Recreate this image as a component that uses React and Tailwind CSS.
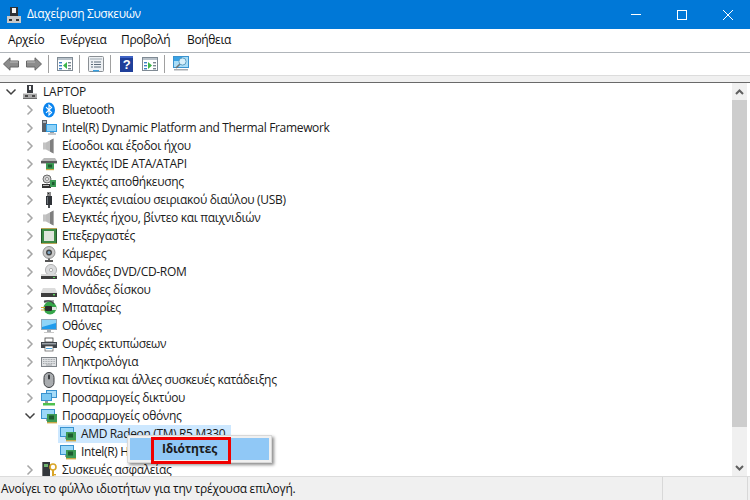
import React from "react";

const I = ({ children, vb = "0 0 16 16", className = "w-4 h-4" }) => (
  <svg viewBox={vb} className={`${className} shrink-0`} xmlns="http://www.w3.org/2000/svg">
    {children}
  </svg>
);

const Computer = () => (
  <I>
    <rect x="5" y="1" width="6" height="8" fill="#3a3d42" />
    <rect x="7" y="2" width="2" height="4" fill="#f4f4f4" />
    <rect x="1" y="9" width="14" height="6" fill="#a8a8a8" />
    <rect x="1" y="9" width="14" height="1" fill="#dadada" />
    <rect x="3" y="11" width="3" height="2" fill="#4a4a4a" />
    <rect x="10" y="11" width="3" height="2" fill="#4a4a4a" />
    <rect x="1" y="14" width="14" height="1" fill="#6b6b6b" />
  </I>
);

const Bluetooth = () => (
  <I>
    <ellipse cx="8" cy="8" rx="6" ry="7.6" fill="#0a84ee" />
    <path d="M5 5.2 10.6 10.6 8 13V3l2.6 2.4L5 10.8" fill="none" stroke="#fff" strokeWidth="1.1" />
  </I>
);

const Platform = () => (
  <I>
    <rect x="1" y="0" width="5" height="12" fill="#5a6068" />
    <rect x="2" y="1" width="3" height="2" fill="#aeb4ba" />
    <rect x="5" y="4" width="11" height="8" fill="#2f9de4" />
    <rect x="6" y="5" width="9" height="6" fill="#8fd2f7" />
    <rect x="9" y="12" width="4" height="1" fill="#9aa0a6" />
    <rect x="7" y="13" width="8" height="2" fill="#c5c8cc" />
  </I>
);

const Speaker = () => (
  <I>
    <rect x="2" y="4.5" width="3" height="7" fill="#c4c4c4" />
    <path d="M5 4.5 12.5 0.5v15L5 11.5z" fill="#bdbdbd" />
    <path d="M9 2.5 12.5 0.5v15L9 13.5z" fill="#7f7f7f" />
  </I>
);

const Chip = ({ x = 5, y = 7 }) => (
  <g>
    <rect x={x} y={y} width="8" height="7" fill="#3d9b55" />
    <rect x={x + 2} y={y + 1.5} width="4" height="3" fill="#1d5b30" />
    <rect x={x} y={y + 6} width="8" height="1.2" fill="#c8a848" />
  </g>
);

const Ide = () => (
  <I>
    <path d="M0 5 3 2h11l2 3v3H0z" fill="#b9b9b9" />
    <rect x="0" y="5" width="16" height="2" fill="#5b5b5b" />
    <Chip x={5} y={7} />
  </I>
);

const Storage = () => (
  <I>
    <circle cx="6" cy="5" r="4" fill="#cfcfcf" stroke="#6a6a6a" strokeWidth="1" />
    <circle cx="6" cy="5" r="1.5" fill="#fff" stroke="#555" strokeWidth="0.6" />
    <rect x="1" y="10" width="9" height="4" fill="#333" />
    <rect x="2" y="11" width="6" height="1" fill="#bbb" />
    <rect x="9" y="6" width="6" height="7" fill="#3d9b55" />
    <rect x="11" y="8" width="2.5" height="3" fill="#1d5b30" />
  </I>
);

const Usb = () => (
  <I>
    <rect x="6" y="0" width="4" height="4" fill="#8a8a8a" />
    <rect x="7" y="1" width="1" height="1" fill="#222" />
    <rect x="5" y="4" width="6" height="9" fill="#2f3338" />
    <rect x="6" y="5" width="1" height="7" fill="#6e747a" />
    <rect x="7" y="13" width="2" height="3" fill="#4a4e52" />
  </I>
);

const Cpu = () => (
  <I>
    <rect x="0" y="0" width="16" height="16" fill="#24562c" />
    <rect x="1" y="1" width="14" height="14" fill="#3c8a44" />
    <rect x="3" y="3" width="10" height="10" fill="#dfe5dc" />
    <rect x="0" y="0" width="16" height="1" fill="#b8a458" />
    <rect x="0" y="15" width="16" height="1" fill="#b8a458" />
  </I>
);

const Camera = () => (
  <I>
    <circle cx="8" cy="6.5" r="6" fill="#c9c9c9" stroke="#7e7e7e" strokeWidth="0.8" />
    <circle cx="8" cy="6.5" r="3" fill="#444" />
    <circle cx="8" cy="6.5" r="1.5" fill="#7fa6c4" />
    <rect x="7" y="12.5" width="2" height="1.5" fill="#666" />
    <rect x="4" y="14" width="8" height="2" fill="#555" />
  </I>
);

const Dvd = () => (
  <I>
    <circle cx="10" cy="6" r="5.6" fill="#d9dadc" stroke="#9a9a9a" strokeWidth="0.7" />
    <circle cx="10" cy="6" r="1.6" fill="#fff" stroke="#8a8a8a" strokeWidth="0.6" />
    <rect x="0" y="10" width="16" height="2" fill="#d8d8d8" />
    <rect x="0" y="12" width="16" height="3" fill="#3e3e3e" />
    <rect x="12" y="13" width="2" height="1" fill="#5fd35f" />
  </I>
);

const Disk = () => (
  <I>
    <path d="M2 6h12l2 4v1H0v-1z" fill="#dcdcdc" />
    <rect x="0" y="11" width="16" height="4" fill="#3e3e3e" />
    <rect x="12" y="12" width="2" height="1.4" fill="#5fd35f" />
  </I>
);

const Battery = () => (
  <I>
    <rect x="3" y="0" width="10" height="3" fill="#9ea4a8" />
    <circle cx="9" cy="8" r="6.5" fill="#36a64a" />
    <path d="M3 2c4-2 8-1 10 2" fill="none" stroke="#444" strokeWidth="1.2" />
    <rect x="4" y="6" width="7" height="5" rx="1" fill="#2c2c2c" />
    <rect x="0" y="7" width="4" height="1" fill="#d6a52e" />
    <rect x="0" y="9.5" width="4" height="1" fill="#d6a52e" />
    <rect x="11" y="7" width="4" height="3" fill="#e6e6e6" />
  </I>
);

const Monitor = () => (
  <I>
    <rect x="0" y="1" width="16" height="11" fill="#8fa6b8" />
    <rect x="1" y="2" width="14" height="9" fill="#1f9bec" />
    <path d="M1 2h14v3L1 9z" fill="#8ed4f8" />
    <rect x="6" y="12" width="4" height="2" fill="#a9adb1" />
    <rect x="3" y="14" width="10" height="1" fill="#c9c9c9" />
  </I>
);

const Printer = () => (
  <I>
    <rect x="4" y="2" width="8" height="4" fill="#fff" stroke="#444" strokeWidth="0.8" />
    <rect x="0" y="6" width="16" height="6" fill="#3f444a" />
    <rect x="1" y="7" width="14" height="1.5" fill="#9aa0a6" />
    <rect x="4" y="10" width="8" height="5" fill="#fff" stroke="#555" strokeWidth="0.7" />
    <rect x="5" y="12" width="6" height="1" fill="#4aa5e0" />
  </I>
);

const Keyboard = () => (
  <I>
    <rect x="0" y="3" width="16" height="10" fill="#7e8388" />
    <rect x="1" y="4" width="14" height="8" fill="#dfe1e3" />
    <path d="M2 5.5h12M2 7.5h12M2 9.5h12" stroke="#a5a9ad" strokeWidth="1" strokeDasharray="1 0.6" />
    <rect x="5" y="10.5" width="6" height="1" fill="#9ea2a6" />
  </I>
);

const Mouse = () => (
  <I>
    <rect x="3" y="0.5" width="10" height="15" rx="5" fill="#a9acaf" stroke="#3a3d40" strokeWidth="1" />
    <rect x="7" y="2.5" width="2" height="5" rx="1" fill="#3a3d40" />
  </I>
);

const Network = () => (
  <I>
    <rect x="5" y="0" width="11" height="8" fill="#3a93cf" />
    <rect x="6" y="1" width="9" height="6" fill="#a8dcf8" />
    <rect x="0" y="3" width="11" height="8" fill="#3a93cf" />
    <rect x="1" y="4" width="9" height="6" fill="#7cc8f2" />
    <rect x="4" y="11" width="3" height="2" fill="#9a9a9a" />
    <rect x="2" y="13" width="12" height="2.5" fill="#4fc14f" />
  </I>
);

const Adapter = () => (
  <I>
    <rect x="0" y="1" width="14" height="10" fill="#3a93cf" />
    <rect x="1" y="2" width="12" height="8" fill="#9cd8f8" />
    <rect x="5" y="11" width="4" height="2" fill="#9aa0a6" />
    <rect x="6" y="6" width="10" height="8" fill="#3d9b55" />
    <rect x="8" y="7.5" width="5" height="4" fill="#1d5b30" />
    <rect x="6" y="14" width="10" height="1.4" fill="#c8a848" />
  </I>
);

const Security = () => (
  <I>
    <rect x="1" y="0" width="8" height="16" fill="#33373b" />
    <rect x="3" y="2" width="4" height="3" fill="#6fb46f" />
    <rect x="1" y="0" width="1" height="16" fill="#777" />
    <circle cx="12" cy="5" r="3" fill="none" stroke="#d9a528" strokeWidth="1.6" />
    <rect x="11" y="8" width="2" height="7" fill="#d9a528" />
    <rect x="13" y="12" width="2" height="1.4" fill="#d9a528" />
  </I>
);

const ChevRight = () => (
  <svg viewBox="0 0 8 12" className="w-2 h-3 shrink-0">
    <path d="M1.5 1.5 6 6l-4.5 4.5" fill="none" stroke="#a6a6a6" strokeWidth="1.5" />
  </svg>
);

const ChevDown = () => (
  <svg viewBox="0 0 12 8" className="w-3 h-2 shrink-0">
    <path d="M1.5 1.5 6 6l4.5-4.5" fill="none" stroke="#404040" strokeWidth="1.5" />
  </svg>
);

const Row = ({ icon, label, open, child, root, selected }) => {
  if (child) {
    return (
      <div className="h-[18px] flex items-center pl-[58px] leading-[14px]">
        <div className={`h-[18px] flex items-center pl-[2px] pr-[1px] ${selected ? "w-[173px] bg-[#cde8ff]" : ""}`}>
          {icon}
          <span className="ml-[5px] whitespace-nowrap">{label}</span>
        </div>
      </div>
    );
  }
  return (
    <div className={`h-[18px] flex items-center leading-[14px] ${root ? "pl-[4px]" : "pl-[23px]"}`}>
      <span className="w-[13px] h-[18px] flex items-center justify-center shrink-0">
        {open ? <ChevDown /> : <ChevRight />}
      </span>
      <span className="ml-[5px] flex">{icon}</span>
      <span className={`ml-[5px] whitespace-nowrap ${root ? "tracking-[-0.2px]" : "tracking-[-0.33px]"}`}>{label}</span>
    </div>
  );
};

const ScrollChev = ({ up }) => (
  <svg viewBox="0 0 9 6" className="w-[9px] h-[6px]">
    <path d={up ? "M1 5 4.5 1.5 8 5" : "M1 1 4.5 4.5 8 1"} fill="none" stroke="#606060" strokeWidth="2" />
  </svg>
);

const rows = [
  { icon: <Computer />, label: "LAPTOP", open: true, root: true },
  { icon: <Bluetooth />, label: "Bluetooth" },
  { icon: <Platform />, label: "Intel(R) Dynamic Platform and Thermal Framework" },
  { icon: <Speaker />, label: "Είσοδοι και έξοδοι ήχου" },
  { icon: <Ide />, label: "Ελεγκτές IDE ATA/ATAPI" },
  { icon: <Storage />, label: "Ελεγκτές αποθήκευσης" },
  { icon: <Usb />, label: "Ελεγκτές ενιαίου σειριακού διαύλου (USB)" },
  { icon: <Speaker />, label: "Ελεγκτές ήχου, βίντεο και παιχνιδιών" },
  { icon: <Cpu />, label: "Επεξεργαστές" },
  { icon: <Camera />, label: "Κάμερες" },
  { icon: <Dvd />, label: "Μονάδες DVD/CD-ROM" },
  { icon: <Disk />, label: "Μονάδες δίσκου" },
  { icon: <Battery />, label: "Μπαταρίες" },
  { icon: <Monitor />, label: "Οθόνες" },
  { icon: <Printer />, label: "Ουρές εκτυπώσεων" },
  { icon: <Keyboard />, label: "Πληκτρολόγια" },
  { icon: <Mouse />, label: "Ποντίκια και άλλες συσκευές κατάδειξης" },
  { icon: <Network />, label: "Προσαρμογείς δικτύου" },
  { icon: <Adapter />, label: "Προσαρμογείς οθόνης", open: true },
  { icon: <Adapter />, label: "AMD Radeon (TM) R5 M330", child: true, selected: true },
  { icon: <Adapter />, label: "Intel(R) HD Graphics 5500", child: true },
  { icon: <Security />, label: "Συσκευές ασφαλείας" },
];

const Sep = () => <div className="w-px h-[18px] bg-[#a0a0a0]" />;

const Arrow = ({ flip }) => (
  <svg viewBox="0 0 16 14" className={`w-4 h-[14px] ${flip ? "-scale-x-100" : ""}`}>
    <path d="M0.5 7 7 0.8V4h8.5v6H7v3.2z" fill="#8c8c8c" stroke="#666" strokeWidth="1" />
    <path d="M7 5h8" stroke="#c0c0c0" strokeWidth="1" />
  </svg>
);

const Pane = ({ mark }) => (
  <I>
    <rect x="0.5" y="1.5" width="15" height="13" fill="#fff" stroke="#7f8a94" />
    <rect x="1" y="2" width="14" height="2" fill="#b9c2ca" />
    <rect x="2" y="6" width="3" height="1.4" fill="#3f7fc4" />
    <rect x="2" y="9" width="3" height="1.4" fill="#3f7fc4" />
    <rect x="2" y="12" width="3" height="1.4" fill="#3f7fc4" />
    <rect x="11" y="6" width="3" height="1.4" fill="#7a8690" />
    <rect x="11" y="9" width="3" height="1.4" fill="#7a8690" />
    <rect x="11" y="12" width="3" height="1.4" fill="#7a8690" />
    <path d={mark === "left" ? "M10 6v7L6 9.5z" : "M6 6v7l4-3.5z"} fill="#3cb44a" />
  </I>
);

export default function App() {
  return (
    <div
      className="w-[750px] h-[500px] flex flex-col bg-white overflow-hidden relative text-[12px] text-[#1a1a1a] tracking-[-0.35px]"
      style={{ fontFamily: '"Open Sans", "Noto Sans", sans-serif' }}
    >
      {/* title bar */}
      <div className="h-[29px] shrink-0 bg-[#0078d7] flex items-center pl-[7px] text-white relative">
        <svg viewBox="0 0 14 16" className="w-[14px] h-4 shrink-0">
          <rect x="3" y="0" width="8" height="9" fill="#2e3136" />
          <rect x="5" y="1" width="4" height="5" fill="#f4f4f4" />
          <rect x="0" y="9" width="14" height="7" fill="#c9c9c9" />
          <rect x="2" y="12" width="3" height="2" fill="#333" />
          <rect x="9" y="12" width="3" height="2" fill="#333" />
        </svg>
        <span className="ml-[6px] leading-none pb-px">Διαχείριση Συσκευών</span>
        <div className="ml-auto flex items-center h-full">
          <div className="w-[46px] h-full flex items-center justify-center">
            <div className="w-[10px] h-px bg-white" />
          </div>
          <div className="w-[46px] h-full flex items-center justify-center">
            <div className="w-[10px] h-[10px] border border-white" />
          </div>
          <div className="w-[46px] h-full flex items-center justify-center mr-[-1px]">
            <svg viewBox="0 0 10 10" className="w-[10px] h-[10px]">
              <path d="M0 0 10 10M10 0 0 10" stroke="#fff" strokeWidth="1" />
            </svg>
          </div>
        </div>
      </div>

      {/* menu bar */}
      <div className="h-[22px] shrink-0 flex items-center border-b border-[#b0b5ba] box-content pb-px text-[#111]">
        <span className="ml-[8px] w-[36px]">Αρχείο</span>
        <span className="ml-[16px] w-[45px]">Ενέργεια</span>
        <span className="ml-[16px] w-[50px]">Προβολή</span>
        <span className="ml-[16px]">Βοήθεια</span>
      </div>

      {/* toolbar */}
      <div className="h-[23px] shrink-0 flex items-center pl-[3px] border-b border-[#dcdcdc]">
        <Arrow />
        <div className="w-[7px]" />
        <Arrow flip />
        <div className="w-[6px]" />
        <Sep />
        <div className="w-2" />
        <Pane mark="left" />
        <div className="w-[6px]" />
        <Sep />
        <div className="w-2" />
        <I>
          <rect x="0.5" y="0.5" width="15" height="15" rx="1" fill="#eef1f4" stroke="#8a8f94" />
          <rect x="2" y="2" width="12" height="2" fill="#c5ccd2" />
          <path d="M3 6h2M6 6h7M3 8.5h2M6 8.5h7M3 11h2M6 11h7" stroke="#5b6b7a" strokeWidth="1" />
          <rect x="5" y="14" width="6" height="1.5" fill="#38a0e0" />
        </I>
        <div className="w-[6px]" />
        <Sep />
        <div className="w-[9px]" />
        <svg viewBox="0 0 13 16" className="w-[13px] h-4">
          <rect width="13" height="16" fill="#1f3f9a" />
          <rect width="13" height="2" fill="#3f63c4" />
          <text x="6.5" y="13" textAnchor="middle" fontSize="13" fontWeight="700" fill="#fff" fontFamily="Liberation Sans">?</text>
        </svg>
        <div className="w-[9px]" />
        <Pane mark="right" />
        <div className="w-[6px]" />
        <Sep />
        <div className="w-2" />
        <I>
          <rect x="0.5" y="0.5" width="15" height="11" fill="#a9ddf7" stroke="#3a93cf" />
          <rect x="1" y="1" width="8" height="4" fill="#3aa2e4" />
          <circle cx="9.5" cy="5.5" r="3.6" fill="#d8f0fb" stroke="#5f9fc4" strokeWidth="1" />
          <path d="M6.8 8.2 3 12" stroke="#707478" strokeWidth="1.6" />
          <rect x="1" y="13" width="14" height="1.5" fill="#a9adb1" />
        </I>
      </div>

      <div className="h-[6px] shrink-0 bg-[#f0f0f0]" />
      <div className="h-px shrink-0 bg-[#696969]" />

      {/* tree + scrollbar */}
      <div className="flex-1 flex min-h-0">
        <div className="flex-1 min-w-0 overflow-hidden">
          {rows.map((r, i) => (
            <Row key={i} {...r} />
          ))}
        </div>
        <div className="w-[15px] shrink-0 bg-[#f0f0f0] flex flex-col">
          <div className="h-[17px] flex items-center justify-center"><ScrollChev up /></div>
          <div className="h-[327px] bg-[#cdcdcd]" />
          <div className="flex-1" />
          <div className="h-[17px] flex items-center justify-center"><ScrollChev /></div>
        </div>
        <div className="w-[3px] shrink-0" />
      </div>

      {/* status bar */}
      <div className="h-[24px] shrink-0 bg-[#f0f0f0] border-t border-[#dcdcdc] flex items-center pl-px text-[#111]">
        <span className="whitespace-nowrap flex-1 tracking-[-0.27px]">Ανοίγει το φύλλο ιδιοτήτων για την τρέχουσα επιλογή.</span>
        <div className="w-px h-full bg-[#d8d8d8]" />
        <div className="w-[84px]" />
        <div className="w-px h-full bg-[#d8d8d8]" />
        <div className="w-[2px]" />
      </div>

      {/* context menu */}
      <div className="absolute left-[127px] top-[435px] w-[145px] h-[28px] bg-[#f0f0f0] border border-[#d8d8d8] shadow-[2px_2px_3px_rgba(0,0,0,0.45)] p-[2px]">
        <div className="h-[22px] bg-[#90c8f6] flex items-center pl-[32px] font-bold text-[#1a1a1a] tracking-[-0.25px]">
          Ιδιότητες
        </div>
      </div>
      <div className="absolute left-[151px] top-[437px] w-[80px] h-[27px] border-[3px] border-[#f00000]" />
    </div>
  );
}
